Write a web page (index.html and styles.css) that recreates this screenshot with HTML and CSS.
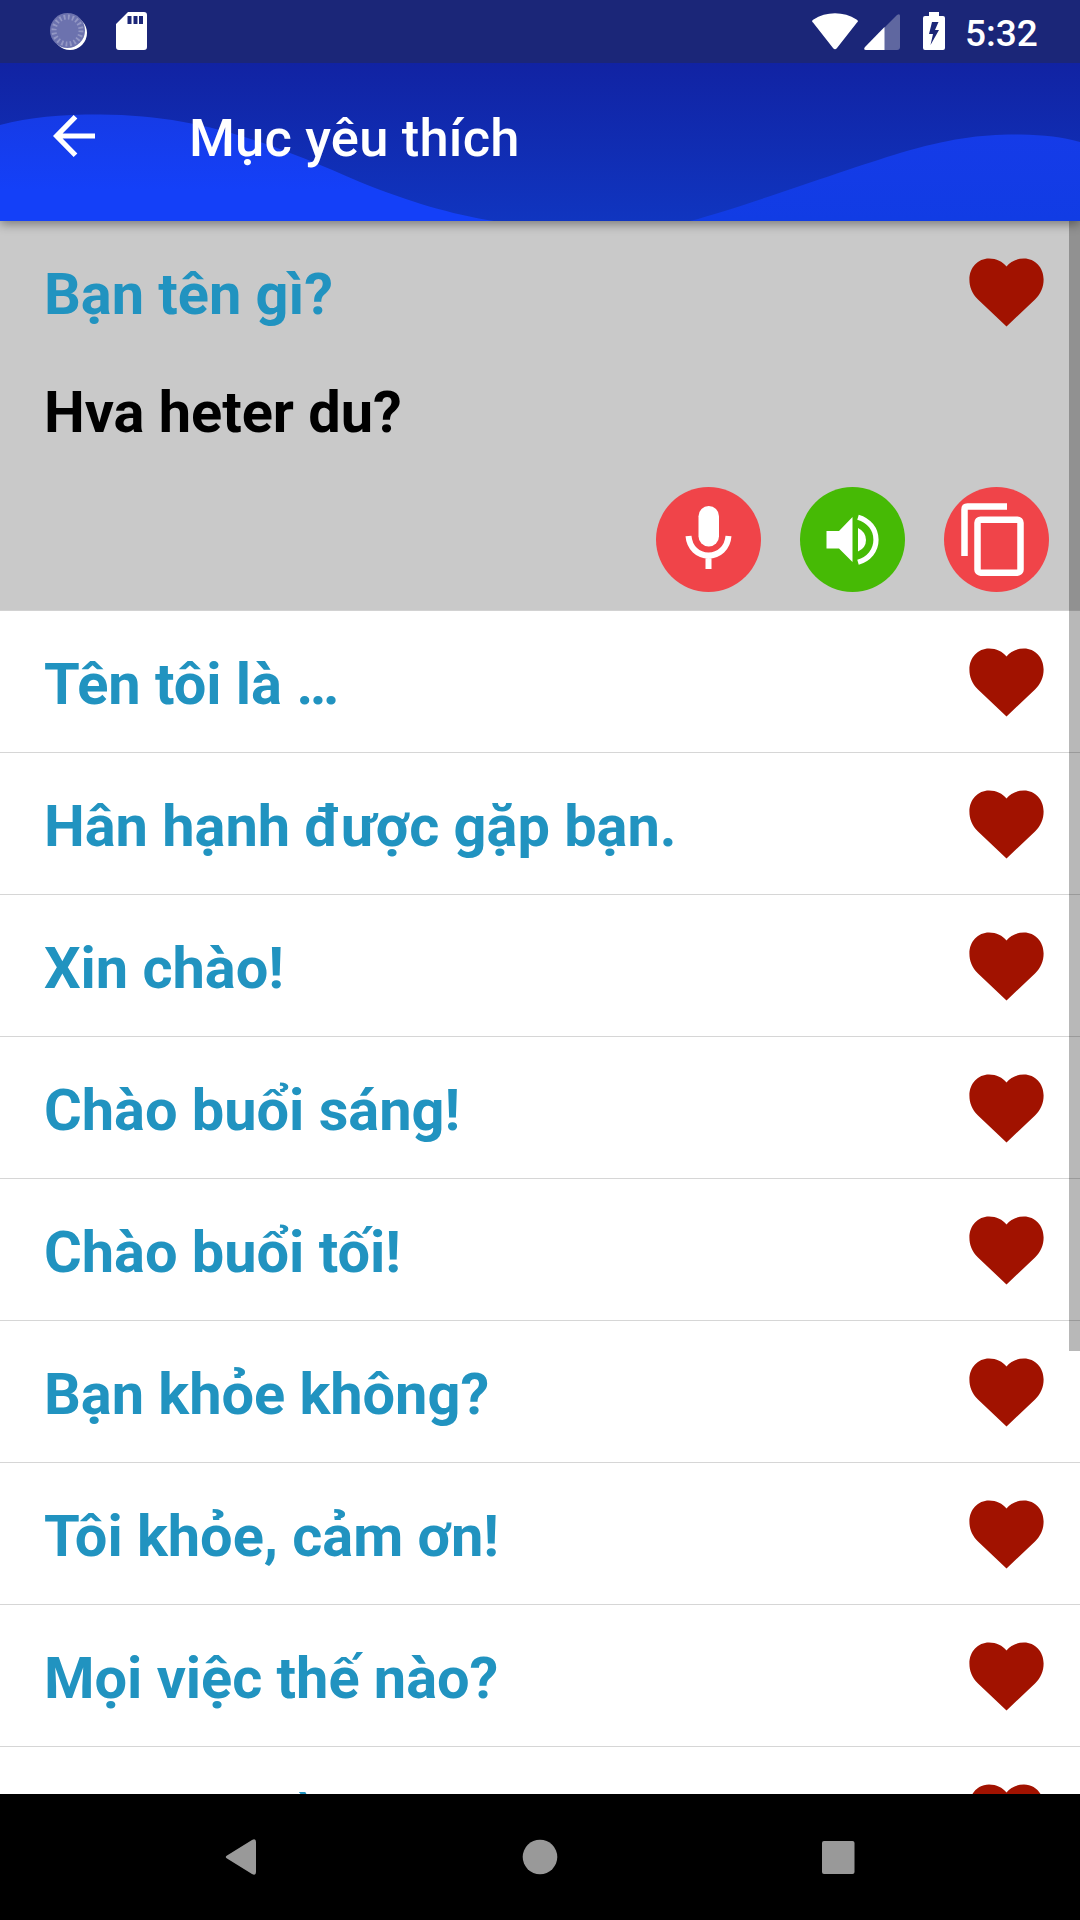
FILE: index.html
```html
<!DOCTYPE html>
<html lang="vi">
<head>
<meta charset="utf-8">
<title>Mục yêu thích</title>
<link rel="stylesheet" href="styles.css">
</head>
<body>
<svg class="defs" width="0" height="0"><defs>
<symbol id="heart" viewBox="0 0 75 69"><path d="M37.500 68.500L9 41.500C3 35.500 .4 29 .4 21.500C.4 9.500 9 .5 20 .5C27.500 .5 33.500 3.500 37.500 8.500C41.500 3.500 47.500 .5 55 .5C66 .5 74.600 9.500 74.600 21.500C74.600 29 72 35.500 66 41.500Z"/></symbol>
</defs></svg>
<div class="screen">
<header class="top">
<svg class="wave" viewBox="0 63 1080 158" preserveAspectRatio="none">
<defs>
<linearGradient id="w1" x1="0" y1="114" x2="0" y2="190" gradientUnits="userSpaceOnUse"><stop offset="0" stop-color="#163be6"/><stop offset="1" stop-color="#1440f8"/></linearGradient>
<linearGradient id="w2" x1="0" y1="134" x2="0" y2="221" gradientUnits="userSpaceOnUse"><stop offset="0" stop-color="#153be8"/><stop offset="1" stop-color="#113ce4"/></linearGradient>
</defs>
<path fill="url(#w1)" d="M0 125C30 117 60 114.500 100 114.500C200 115 270 143 360 182C410 202 450 214 494 221H0Z"/>
<path fill="url(#w2)" d="M690 221C740 208 850 168 900 153C950 138 985 134 1020 134.500C1045 135 1062 137 1080 142V221Z"/>
</svg>
<div class="status">
<svg class="s-sync" viewBox="0 0 38 38"><circle cx="20" cy="20" r="17" fill="#fff"/><circle cx="17.500" cy="17.500" r="17.500" fill="#6c72ae"/><circle cx="17.500" cy="17.500" r="13.500" fill="none" stroke="#9397c4" stroke-width="5" stroke-dasharray="1.800 2.440"/></svg>
<svg class="s-sd" viewBox="0 0 31 38"><path fill="#fff" fill-rule="evenodd" d="M12 0H28Q31 0 31 3V35Q31 38 28 38H3Q0 38 0 35V12ZM11.500 4V12H15.500V4ZM17.500 4V12H21.500V4ZM23 4V12H27V4Z"/></svg>
<span class="grow"></span>
<svg class="s-wifi" viewBox="0 0 46 37"><path fill="#fff" d="M1 9.500Q-1 8 1.500 6.500C14-2 32-2 44.500 6.500Q47 8 45 9.500L25 35Q23 37.500 21 35Z"/></svg>
<svg class="s-cell" viewBox="0 0 36 36"><path fill="#fff" fill-opacity=".3" d="M20 14L33 1Q36-1 36 2V33Q36 36 33 36H20Z"/><path fill="#fff" d="M20.500 13V36H2Q-1 36 1 33Z"/></svg>
<svg class="s-bat" viewBox="0 0 22 38"><path fill="#fff" fill-rule="evenodd" d="M6 0H16V4H20Q22 4 22 6V36Q22 38 20 38H2Q0 38 0 36V6Q0 4 2 4H6ZM9 10L6 22H10L7.500 33L16 18H12L15.500 10Z"/></svg>
<span class="clock">5:32</span>
</div>
<div class="bar">
<svg class="back" viewBox="0 0 42 42"><path fill="none" stroke="#fff" stroke-width="5.200" d="M22.500 1.800L3.600 21L22.500 40.200M3.600 21H42"/></svg>
<h1>Mục yêu thích</h1>
</div>
</header>
<main class="list">
<article class="open">
<div class="row"><span>Bạn tên gì?</span><svg class="heart"><use href="#heart"/></svg></div>
<p class="answer">Hva heter du?</p>
<div class="actions">
<svg viewBox="0 0 105 105"><circle cx="52.500" cy="52.500" r="52.500" fill="#f04449"/><rect x="42.500" y="19" width="20.500" height="40.500" rx="10.200" fill="#fff"/><path fill="none" stroke="#fff" stroke-width="6" d="M32.500 49C33.500 61 42 68.500 52.500 68.500S71.500 61 72.500 49M52.500 68V82"/></svg>
<svg viewBox="0 0 105 105"><circle cx="52.500" cy="52.500" r="52.500" fill="#46ba05"/><path fill="#fff" d="M26.500 44H39L52.500 30V75L39 61.500H26.500ZM58 41Q66 45 66 53T58 64.500Z"/><path fill="none" stroke="#fff" stroke-width="5.200" d="M58 30.200C69 33.500 76 42 76 52.700S69 72 58 75.200"/></svg>
<svg viewBox="0 0 105 105"><circle cx="52.500" cy="52.500" r="52.500" fill="#f04449"/><path fill="none" stroke="#fff" stroke-width="6.500" d="M20.500 69V22.500Q20.500 19.500 23.500 19.500H63"/><rect x="33.500" y="32.700" width="43" height="53" rx="3" fill="none" stroke="#fff" stroke-width="6.500"/></svg>
</div>
</article>
<div class="row"><span>Tên tôi là …</span><svg class="heart"><use href="#heart"/></svg></div>
<div class="row"><span>Hân hạnh được gặp bạn.</span><svg class="heart"><use href="#heart"/></svg></div>
<div class="row"><span>Xin chào!</span><svg class="heart"><use href="#heart"/></svg></div>
<div class="row"><span>Chào buổi sáng!</span><svg class="heart"><use href="#heart"/></svg></div>
<div class="row"><span>Chào buổi tối!</span><svg class="heart"><use href="#heart"/></svg></div>
<div class="row"><span>Bạn khỏe không?</span><svg class="heart"><use href="#heart"/></svg></div>
<div class="row"><span>Tôi khỏe, cảm ơn!</span><svg class="heart"><use href="#heart"/></svg></div>
<div class="row"><span>Mọi việc thế nào?</span><svg class="heart"><use href="#heart"/></svg></div>
<div class="row last"><span>Không nhiều.</span><svg class="heart"><use href="#heart"/></svg></div>
<div class="thumb"></div>
</main>
<nav class="nav">
<svg viewBox="0 0 40 40"><path fill="#999" d="M6 18.500L31 3Q35 1 35 5V35Q35 39 31 37L6 21.500Q3.500 20 6 18.500Z"/></svg>
<svg viewBox="0 0 40 40"><circle cx="20" cy="20" r="17.300" fill="#999"/></svg>
<svg viewBox="0 0 40 40"><rect x="4" y="4" width="32.500" height="33" rx="2" fill="#999"/></svg>
</nav>
</div>
</body>
</html>
```
FILE: styles.css
```css
* { box-sizing: border-box; }
body { margin: 0; background: #fff; font-family: Roboto, "Noto Sans", sans-serif; }
svg { display: block; flex: none; }
.defs { position: absolute; }
.screen { width: 1080px; height: 1920px; display: flex; flex-direction: column; overflow: hidden; }

.top { position: relative; z-index: 1; height: 221px; flex: none; background: linear-gradient(#1123a3 63px, #1035c0 221px); box-shadow: 0 3px 10px rgba(0,0,0,.4); }
.wave { position: absolute; left: 0; top: 63px; width: 1080px; height: 158px; }
.status { position: relative; height: 63px; background: #1b2678; display: flex; align-items: flex-start; padding: 12px 41px 0 50px; color: #fff; }
.s-sync { width: 38px; height: 38px; margin-top: 1px; }
.s-sd { width: 31px; height: 38px; margin-left: 28px; }
.grow { flex: 1; }
.s-wifi { width: 46px; height: 37px; margin-top: 1px; }
.s-cell { width: 36px; height: 36px; margin: 2px 0 0 6px; }
.s-bat { width: 22px; height: 38px; margin-left: 23px; }
.clock { margin-left: 20px; font-size: 37px; font-weight: 500; line-height: 43px; width: 74px; white-space: nowrap; }
.bar { position: relative; height: 158px; display: flex; align-items: flex-start; padding-left: 53px; color: #fff; }
.back { width: 42px; height: 42px; margin-top: 52px; }
h1 { margin: 44px 0 0 94px; font-size: 52.5px; font-weight: 500; line-height: 62px; letter-spacing: .18px; }

.list { position: relative; flex: 1; min-height: 0; overflow: hidden; }
.row { height: 142px; border-bottom: 1px solid #d6d6d6; display: flex; justify-content: space-between; align-items: flex-start; padding: 37px 36px 0 44px; color: #2193c0; font-size: 57.75px; font-weight: 700; line-height: 72px; letter-spacing: -.04px; white-space: nowrap; }
.heart { width: 75px; height: 69px; margin-top: -.5px; fill: #a11200; }
.open { height: 390px; background: #c9c9c9; border-bottom: 1px solid #d2d2d2; }
.open .row { border: 0; height: 118px; }
.answer { margin: 0; padding: 37px 44px 0; height: 148px; color: #000; font-size: 57.75px; font-weight: 700; line-height: 72px; letter-spacing: -.04px; }
.last span { margin-top: -2px; letter-spacing: -.3px; }
.actions { display: flex; justify-content: flex-end; gap: 39px; padding-right: 31px; }
.actions svg { width: 105px; height: 105px; }
.thumb { position: absolute; right: 0; top: 0; width: 11px; height: 1130px; background: rgba(0,0,0,.28); }

.nav { flex: none; height: 126px; background: #000; display: flex; justify-content: center; align-items: center; gap: 258.500px; padding: 0 1px 1px 0; }
.nav svg { width: 40px; height: 40px; }
```
